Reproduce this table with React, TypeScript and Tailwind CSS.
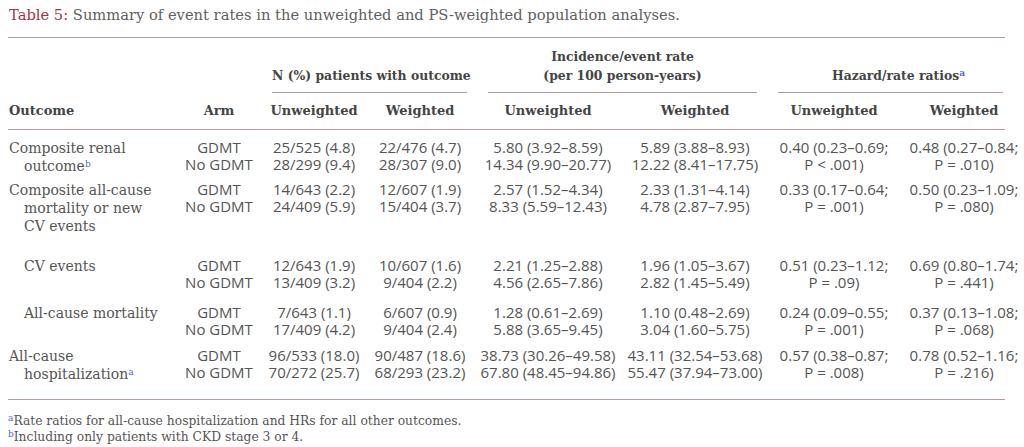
import React from "react";

const serif = "font-['DejaVu_Serif',serif]";
const sans = "font-['Open_Sans',sans-serif]";

type Row = {
  outcome: React.ReactNode;
  h: string;
  n: [string, string][];
  inc: [string, string][];
  hr: [string, string];
  hrw: [string, string];
};

const Sup = ({ c }: { c: string }) => (
  <sup className="text-[9px] text-[#5566c8]">{c}</sup>
);

const rows: Row[] = [
  {
    outcome: (
      <>
        <div>Composite renal</div>
        <div className="pl-[15px]">
          outcome
          <Sup c="b" />
        </div>
      </>
    ),
    h: "h-[42px]",
    n: [
      ["25/525 (4.8)", "22/476 (4.7)"],
      ["28/299 (9.4)", "28/307 (9.0)"],
    ],
    inc: [
      ["5.80 (3.92–8.59)", "5.89 (3.88–8.93)"],
      ["14.34 (9.90–20.77)", "12.22 (8.41–17.75)"],
    ],
    hr: ["0.40 (0.23–0.69;", "P < .001)"],
    hrw: ["0.48 (0.27–0.84;", "P = .010)"],
  },
  {
    outcome: (
      <>
        <div>Composite all-cause</div>
        <div className="pl-[15px]">mortality or new</div>
        <div className="pl-[15px]">CV events</div>
      </>
    ),
    h: "h-[76px]",
    n: [
      ["14/643 (2.2)", "12/607 (1.9)"],
      ["24/409 (5.9)", "15/404 (3.7)"],
    ],
    inc: [
      ["2.57 (1.52–4.34)", "2.33 (1.31–4.14)"],
      ["8.33 (5.59–12.43)", "4.78 (2.87–7.95)"],
    ],
    hr: ["0.33 (0.17–0.64;", "P = .001)"],
    hrw: ["0.50 (0.23–1.09;", "P = .080)"],
  },
  {
    outcome: <div className="pl-[15px]">CV events</div>,
    h: "h-[47px]",
    n: [
      ["12/643 (1.9)", "10/607 (1.6)"],
      ["13/409 (3.2)", "9/404 (2.2)"],
    ],
    inc: [
      ["2.21 (1.25–2.88)", "1.96 (1.05–3.67)"],
      ["4.56 (2.65–7.86)", "2.82 (1.45–5.49)"],
    ],
    hr: ["0.51 (0.23–1.12;", "P = .09)"],
    hrw: ["0.69 (0.80–1.74;", "P = .441)"],
  },
  {
    outcome: <div className="pl-[15px]">All-cause mortality</div>,
    h: "h-[43px]",
    n: [
      ["7/643 (1.1)", "6/607 (0.9)"],
      ["17/409 (4.2)", "9/404 (2.4)"],
    ],
    inc: [
      ["1.28 (0.61–2.69)", "1.10 (0.48–2.69)"],
      ["5.88 (3.65–9.45)", "3.04 (1.60–5.75)"],
    ],
    hr: ["0.24 (0.09–0.55;", "P = .001)"],
    hrw: ["0.37 (0.13–1.08;", "P = .068)"],
  },
  {
    outcome: (
      <>
        <div>All-cause</div>
        <div className="pl-[15px]">
          hospitalization
          <Sup c="a" />
        </div>
      </>
    ),
    h: "h-[52px]",
    n: [
      ["96/533 (18.0)", "90/487 (18.6)"],
      ["70/272 (25.7)", "68/293 (23.2)"],
    ],
    inc: [
      ["38.73 (30.26–49.58)", "43.11 (32.54–53.68)"],
      ["67.80 (48.45–94.86)", "55.47 (37.94–73.00)"],
    ],
    hr: ["0.57 (0.38–0.87;", "P = .008)"],
    hrw: ["0.78 (0.52–1.16;", "P = .216)"],
  },
];

const cols =
  "grid grid-cols-[172px_78px_112px_100px_156px_138px_140px_120px]";

function Cell({ lines }: { lines: string[] }) {
  return (
    <div className={`${sans} text-[15px] leading-[17px] text-center whitespace-nowrap`}>
      {lines.map((l, i) => (
        <div key={i}>{l}</div>
      ))}
    </div>
  );
}

export default function App() {
  return (
    <div className="w-[1024px] h-[447px] bg-white overflow-hidden text-[#555]">
      <div className={`${serif} text-[14.7px] leading-[20px] pl-[9px] pt-[5px] h-[37px] whitespace-nowrap text-[#606060]`}>
        <span className="text-[#a03442]">Table 5:</span> Summary of event rates in the
        unweighted and PS-weighted population analyses.
      </div>
      <div className="ml-2 w-[997px] h-px bg-[#b59c9c]" />

      {/* group header */}
      <div className={`${cols} ml-2 h-[47px] items-end ${serif} font-bold text-[12.4px] leading-[19px] text-[#444] whitespace-nowrap`}>
        <div />
        <div />
        <div className="col-span-2 text-center pl-[14px] pr-[3px]">N (%) patients with outcome</div>
        <div className="col-span-2 text-center pl-[18px] pr-[7px]">
          <div>Incidence/event rate</div>
          <div>(per 100 person-years)</div>
        </div>
        <div className="col-span-2 text-center pl-[30px] pr-[21px]">
          Hazard/rate ratios
          <Sup c="a" />
        </div>
      </div>
      <div className={`${cols} ml-2 mt-[7px]`}>
        <div />
        <div />
        <div className="col-span-2 ml-[14px] mr-[3px] h-px bg-[#b59c9c]" />
        <div className="col-span-2 ml-[18px] mr-[7px] h-px bg-[#b59c9c]" />
        <div className="col-span-2 ml-[14px] mr-[21px] h-px bg-[#b59c9c]" />
      </div>
      <div className={`${cols} ml-2 mt-[8px] h-[28px] ${serif} font-bold text-[13px] leading-[19px] text-[#444] whitespace-nowrap`}>
        <div className="pl-[1px]">Outcome</div>
        <div className="text-center">Arm</div>
        <div className="text-center">Unweighted</div>
        <div className="text-center">Weighted</div>
        <div className="text-center">Unweighted</div>
        <div className="text-center">Weighted</div>
        <div className="text-center">Unweighted</div>
        <div className="text-center">Weighted</div>
      </div>
      <div className="ml-2 w-[997px] h-px bg-[#b59c9c]" />

      <div className="pt-[9px]">
        {rows.map((r, i) => (
          <div key={i} className={`${cols} ml-2 ${r.h} items-start`}>
            <div className={`${serif} text-[14px] leading-[18px] pl-[1px] whitespace-nowrap`}>{r.outcome}</div>
            <Cell lines={["GDMT", "No GDMT"]} />
            <Cell lines={[r.n[0][0], r.n[1][0]]} />
            <Cell lines={[r.n[0][1], r.n[1][1]]} />
            <Cell lines={[r.inc[0][0], r.inc[1][0]]} />
            <Cell lines={[r.inc[0][1], r.inc[1][1]]} />
            <Cell lines={r.hr} />
            <Cell lines={r.hrw} />
          </div>
        ))}
      </div>
      <div className="ml-2 w-[997px] h-px bg-[#b59c9c]" />
      <div className={`${serif} text-[12.3px] leading-[16px] pl-[8px] pt-[13px] whitespace-nowrap`}>
        <div>
          <Sup c="a" />
          Rate ratios for all-cause hospitalization and HRs for all other outcomes.
        </div>
        <div>
          <Sup c="b" />
          Including only patients with CKD stage 3 or 4.
        </div>
      </div>
    </div>
  );
}
